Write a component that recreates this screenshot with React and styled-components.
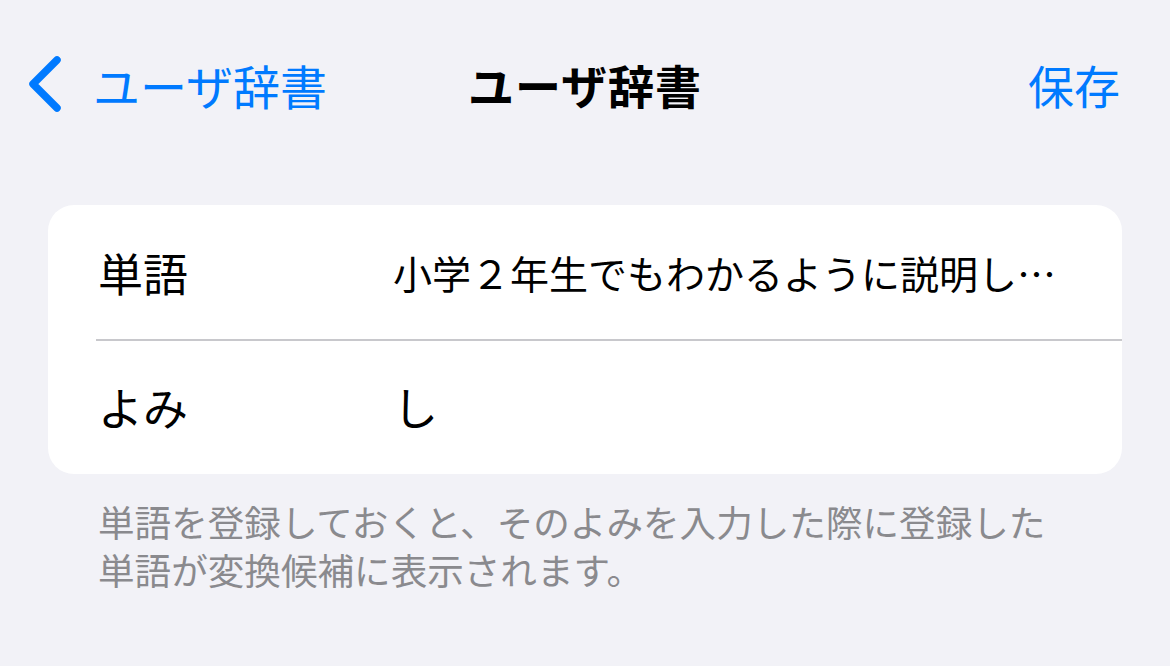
import React from "react";
import styled, { createGlobalStyle } from "styled-components";

const Global = createGlobalStyle`
  html, body {
    margin: 0;
    padding: 0;
    background: #f2f2f7;
  }
  body {
    font-family: "Noto Sans CJK JP", "Noto Sans", sans-serif;
    -webkit-font-smoothing: antialiased;
  }
`;

const Screen = styled.div`
  width: 1170px;
  height: 666px;
  background: #f2f2f7;
  display: flex;
  flex-direction: column;
`;

const Nav = styled.header`
  height: 168px;
  display: grid;
  grid-template-columns: 1fr auto 1fr;
  align-items: center;
  padding: 0 26px;
  box-sizing: border-box;
`;

const BackButton = styled.button`
  justify-self: start;
  display: flex;
  align-items: center;
  gap: 31px;
  border: 0;
  background: none;
  padding: 0;
  color: #007aff;
  font: inherit;
  line-height: 1;
  cursor: pointer;
`;

const BackLabel = styled.span`
  font-size: 47px;
`;

const Title = styled.h1`
  margin: 0;
  font-size: 46px;
  font-weight: 700;
  color: #000;
  letter-spacing: 1px;
`;

const ActionButton = styled.button`
  justify-self: end;
  margin-right: 24px;
  border: 0;
  background: none;
  padding: 0;
  color: #007aff;
  font: inherit;
  font-size: 46px;
  line-height: 1;
  cursor: pointer;
`;

const Card = styled.section`
  margin: 37px 48px 0;
  background: #fff;
  border-radius: 26px;
  overflow: hidden;
`;

const Row = styled.div`
  height: ${(p) => (p.$first ? 134 : 135)}px;
  display: flex;
  align-items: center;
  padding-left: 50px;
  box-sizing: border-box;
  position: relative;
  ${(p) =>
    !p.$first &&
    `
    &::before {
      content: "";
      position: absolute;
      left: 48px;
      right: 0;
      top: 0;
      height: 1.5px;
      background: #c8c8cc;
    }
  `}
`;

const Label = styled.div`
  width: 295px;
  flex: none;
  font-size: 45px;
  color: #000;
`;

const Value = styled.div`
  flex: 1;
  min-width: 0;
  padding-right: 40px;
  font-size: ${(p) => p.$size}px;
  color: #000;
  white-space: nowrap;
  overflow: hidden;
`;

const Footer = styled.p`
  margin: 24px 0 0;
  padding: 0 60px 0 98px;
  font-size: 36.6px;
  line-height: 48px;
  color: #8a8a8e;
`;

export default function App() {
  return (
    <Screen>
      <Global />
      <Nav>
        <BackButton>
          <svg width="36" height="60" viewBox="0 0 36 60" aria-hidden="true">
            <path
              d="M31 6 L7 30 L31 54"
              fill="none"
              stroke="#007aff"
              strokeWidth="7.5"
              strokeLinecap="round"
              strokeLinejoin="round"
            />
          </svg>
          <BackLabel>ユーザ辞書</BackLabel>
        </BackButton>
        <Title>ユーザ辞書</Title>
        <ActionButton>保存</ActionButton>
      </Nav>
      <Card>
        <Row $first>
          <Label>単語</Label>
          <Value $size={39}>小学２年生でもわかるように説明し…</Value>
        </Row>
        <Row>
          <Label>よみ</Label>
          <Value $size={45}>し</Value>
        </Row>
      </Card>
      <Footer>
        単語を登録しておくと、そのよみを入力した際に登録した
        <br />
        単語が変換候補に表示されます。
      </Footer>
    </Screen>
  );
}
